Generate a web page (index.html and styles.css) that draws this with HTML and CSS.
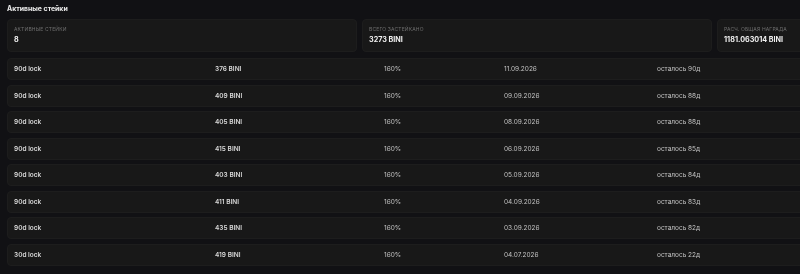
FILE: index.html
```html
<!DOCTYPE html>
<html lang="ru">
<head>
<meta charset="utf-8">
<title>Активные стейки</title>
<link rel="stylesheet" href="styles.css">
</head>
<body>
<div class="page">
  <h2 class="title">Активные стейки</h2>
  <div class="stats">
    <div class="stat"><div class="stat-label">Активные стейки</div><div class="stat-value">8</div></div>
    <div class="stat"><div class="stat-label">Всего застейкано</div><div class="stat-value">3273 BINI</div></div>
    <div class="stat"><div class="stat-label">Расч. общая награда</div><div class="stat-value">1181.063014 BINI</div></div>
  </div>
  <div class="list">
    <div class="row"><span class="c-name">90d lock</span><span class="c-amt">376 BINI</span><span class="c-apr">160%</span><span class="c-date">11.09.2026</span><span class="c-left">осталось 90д</span></div>
    <div class="row"><span class="c-name">90d lock</span><span class="c-amt">409 BINI</span><span class="c-apr">160%</span><span class="c-date">09.09.2026</span><span class="c-left">осталось 88д</span></div>
    <div class="row"><span class="c-name">90d lock</span><span class="c-amt">405 BINI</span><span class="c-apr">160%</span><span class="c-date">08.09.2026</span><span class="c-left">осталось 88д</span></div>
    <div class="row"><span class="c-name">90d lock</span><span class="c-amt">415 BINI</span><span class="c-apr">160%</span><span class="c-date">06.09.2026</span><span class="c-left">осталось 85д</span></div>
    <div class="row"><span class="c-name">90d lock</span><span class="c-amt">403 BINI</span><span class="c-apr">160%</span><span class="c-date">05.09.2026</span><span class="c-left">осталось 84д</span></div>
    <div class="row"><span class="c-name">90d lock</span><span class="c-amt">411 BINI</span><span class="c-apr">160%</span><span class="c-date">04.09.2026</span><span class="c-left">осталось 83д</span></div>
    <div class="row"><span class="c-name">90d lock</span><span class="c-amt">435 BINI</span><span class="c-apr">160%</span><span class="c-date">03.09.2026</span><span class="c-left">осталось 82д</span></div>
    <div class="row"><span class="c-name">30d lock</span><span class="c-amt">419 BINI</span><span class="c-apr">160%</span><span class="c-date">04.07.2026</span><span class="c-left">осталось 22д</span></div>
  </div>
</div>
</body>
</html>
```
FILE: styles.css
```css
html, body {
  margin: 0;
  padding: 0;
  background: #111114;
  overflow: hidden;
}
body {
  font-family: Inter, "Noto Sans", "DejaVu Sans", sans-serif;
  color: #e6e6ea;
}
.page {
  width: 1060px;
  padding: 4px 7px 0 7px;
  filter: grayscale(1);
}
.title {
  margin: 0;
  font-size: 6.9px;
  line-height: 10px;
  font-weight: 700;
  color: #ececf0;
}
.stats {
  margin-top: 5px;
  display: grid;
  grid-template-columns: 350px 350px 350px;
  gap: 5px;
}
.stat {
  background: #18181c;
  border: 1px solid #1d1d22;
  border-radius: 4px;
  height: 33px;
  box-sizing: border-box;
  padding: 6px 6px 0 6px;
}
.stat-label {
  font-size: 5px;
  line-height: 6px;
  text-transform: uppercase;
  letter-spacing: 0.15px;
  color: #6c6e78;
}
.stat-value {
  margin-top: 3px;
  font-size: 7.2px;
  line-height: 10px;
  font-weight: 700;
  color: #f0f0f3;
}
.list {
  margin-top: 6px;
  display: flex;
  flex-direction: column;
  gap: 4.5px;
}
.row {
  height: 22px;
  box-sizing: border-box;
  background: #18181c;
  border: 1px solid #1d1d22;
  border-radius: 4px;
  padding: 0 6px;
  display: grid;
  grid-template-columns: 201px 169px 120px 153px 1fr;
  align-items: center;
  font-size: 6.5px;
  color: #c4c4ca;
}
.c-name, .c-amt {
  font-weight: 600;
  color: #d8d8dc;
}
```
